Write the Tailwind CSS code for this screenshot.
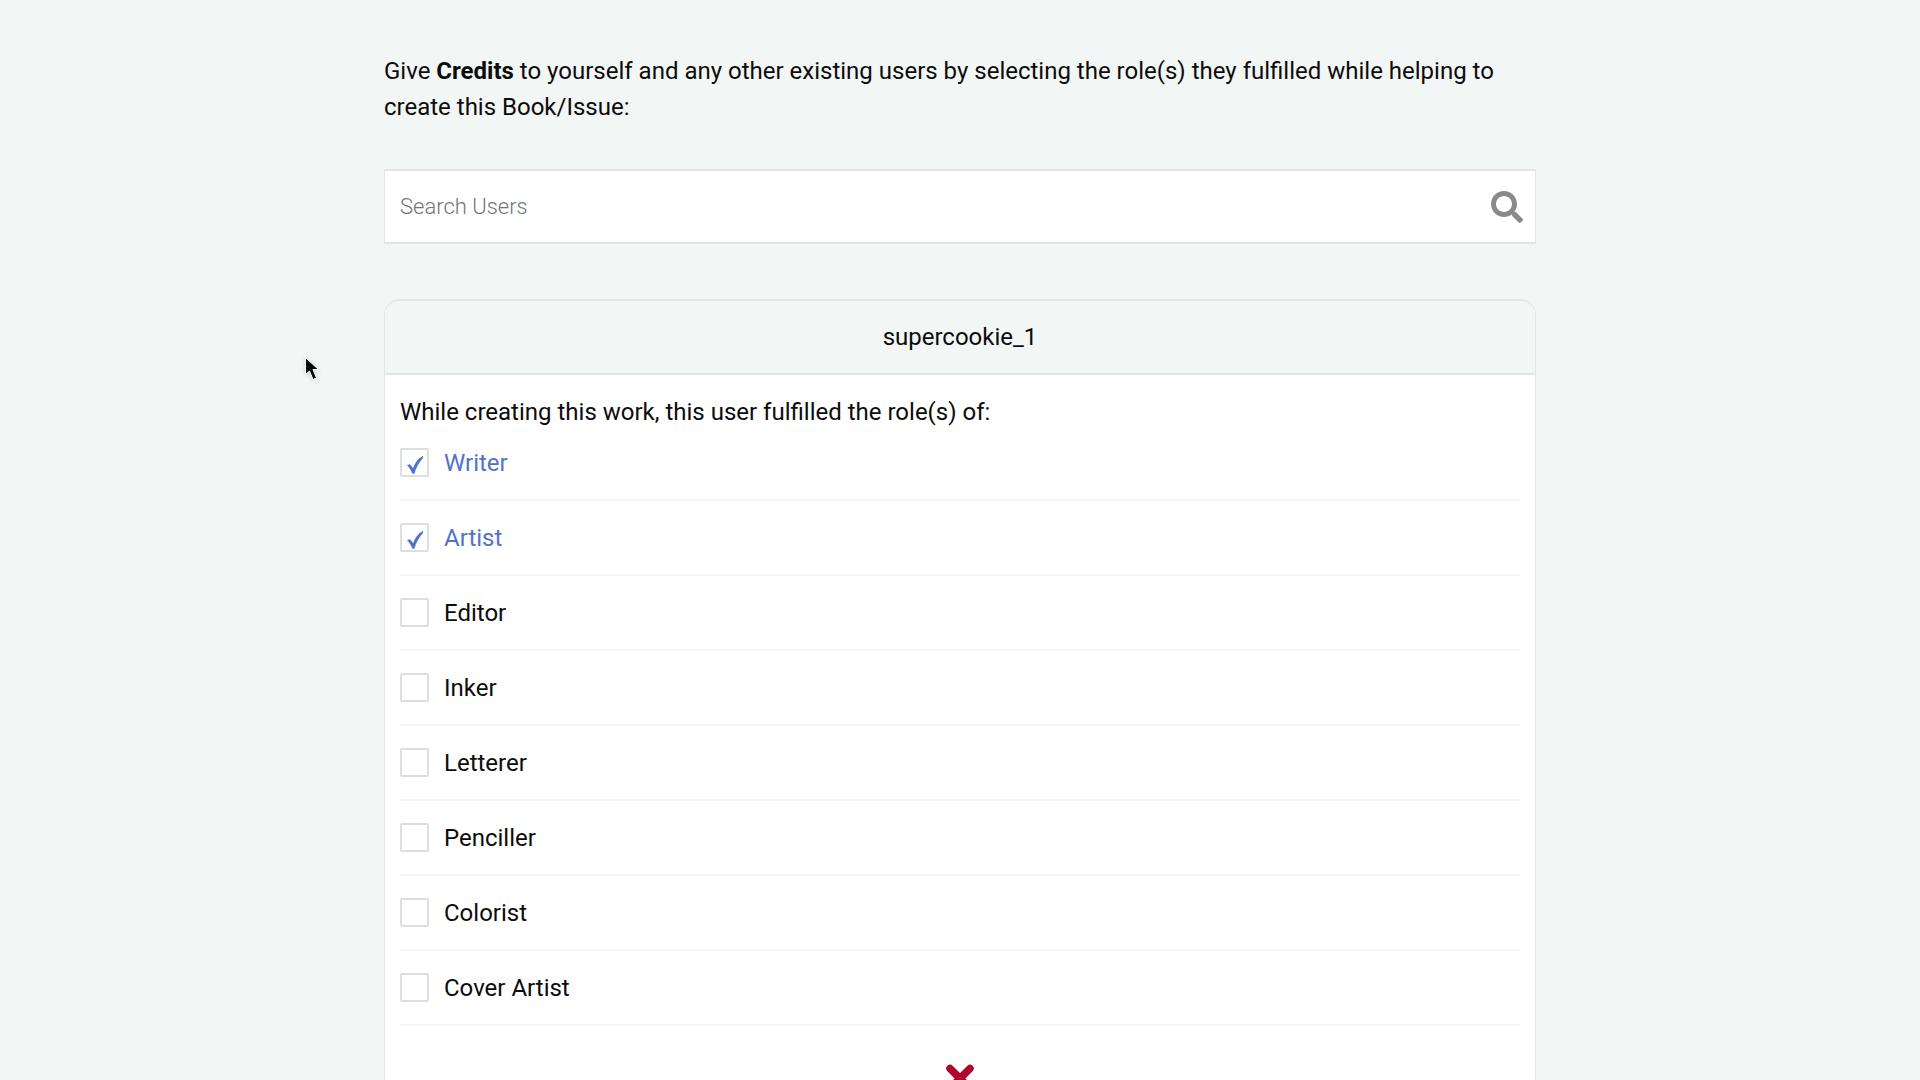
<!DOCTYPE html>
<html lang="en">
<head>
<meta charset="utf-8">
<meta name="viewport" content="width=device-width, initial-scale=1">
<title>Credits</title>
<script src="https://cdn.jsdelivr.net/npm/@tailwindcss/browser@4"></script>
</head>
<body class="min-h-screen bg-[#f2f6f5] font-['Roboto',sans-serif] text-2xl text-[#0c0c0c]">
<main class="mx-auto w-full max-w-6xl pt-[53px]">
  <p class="leading-9">Give <strong class="font-bold">Credits</strong> to yourself and any other existing users by selecting the role(s) they fulfilled while helping to create this Book/Issue:</p>

  <form role="search" class="mt-11 flex h-[75px] items-center border border-y-2 border-[#e2e5e4] bg-white">
    <input type="search" aria-label="Search Users" placeholder="Search Users" class="h-full min-w-0 flex-1 px-[15px] text-[22px] font-light outline-none placeholder:text-[#757575]">
    <button type="button" aria-label="Search" class="mr-3 text-[#8a8a8a]">
      <svg class="size-8" viewBox="0 0 512 512" fill="currentColor" aria-hidden="true"><path d="M505 442.700 405.300 343c-4.500-4.500-10.600-7-17-7H372c27.600-35.300 44-79.700 44-128C416 93.100 322.900 0 208 0S0 93.100 0 208s93.100 208 208 208c48.300 0 92.700-16.400 128-44v16.300c0 6.400 2.500 12.500 7 17l99.700 99.700c9.400 9.400 24.600 9.400 33.900 0l28.300-28.300c9.400-9.400 9.400-24.600.1-34zM208 336c-70.700 0-128-57.200-128-128 0-70.700 57.200-128 128-128 70.700 0 128 57.200 128 128 0 70.700-57.200 128-128 128z"/></svg>
    </button>
  </form>

  <section class="mt-[55px] overflow-hidden rounded-t-2xl border border-t-2 border-[#e2e5e4] bg-white pb-8">
    <h2 class="flex h-[74px] items-center justify-center border-b-2 border-[#e2e5e4] bg-[#f2f6f5]">supercookie_1</h2>
    <fieldset class="px-[15px] pt-[19px]">
      <legend class="contents"><span class="block leading-9">While creating this work, this user fulfilled the role(s) of:</span></legend>
      <ul>
        <li class="flex h-[71px] items-center border-b-2 border-[#f4f5f5] pb-1"><label class="flex items-center gap-[15px] text-[#5272ca]"><span class="grid size-[29px] place-items-center"><input type="checkbox" checked class="peer col-start-1 row-start-1 size-[29px] appearance-none rounded-xs border-2 border-[#dcdfdf] bg-white"><svg class="pointer-events-none invisible relative col-start-1 row-start-1 mt-1 size-5 peer-checked:visible" viewBox="0 0 20 20" fill="currentColor" stroke="currentColor" stroke-width=".4" aria-hidden="true"><path d="M2.300 10.300 5 9.500 8.200 13.500C10 8 13 3.800 18 1L17.500 3.600C13.500 7.500 11.200 12.500 9.300 18.500H7.500C6.200 15.500 4.700 12.700 2.300 10.300Z"/></svg></span>Writer</label></li>
        <li class="flex h-[75px] items-center border-b-2 border-[#f4f5f5]"><label class="flex items-center gap-[15px] text-[#5272ca]"><span class="grid size-[29px] place-items-center"><input type="checkbox" checked class="peer col-start-1 row-start-1 size-[29px] appearance-none rounded-xs border-2 border-[#dcdfdf] bg-white"><svg class="pointer-events-none invisible relative col-start-1 row-start-1 mt-1 size-5 peer-checked:visible" viewBox="0 0 20 20" fill="currentColor" stroke="currentColor" stroke-width=".4" aria-hidden="true"><path d="M2.300 10.300 5 9.500 8.200 13.500C10 8 13 3.800 18 1L17.500 3.600C13.500 7.500 11.200 12.500 9.300 18.500H7.500C6.200 15.500 4.700 12.700 2.300 10.300Z"/></svg></span>Artist</label></li>
        <li class="flex h-[75px] items-center border-b-2 border-[#f4f5f5]"><label class="flex items-center gap-[15px]"><input type="checkbox" class="size-[29px] appearance-none rounded-xs border-2 border-[#dcdfdf] bg-white">Editor</label></li>
        <li class="flex h-[75px] items-center border-b-2 border-[#f4f5f5]"><label class="flex items-center gap-[15px]"><input type="checkbox" class="size-[29px] appearance-none rounded-xs border-2 border-[#dcdfdf] bg-white">Inker</label></li>
        <li class="flex h-[75px] items-center border-b-2 border-[#f4f5f5]"><label class="flex items-center gap-[15px]"><input type="checkbox" class="size-[29px] appearance-none rounded-xs border-2 border-[#dcdfdf] bg-white">Letterer</label></li>
        <li class="flex h-[75px] items-center border-b-2 border-[#f4f5f5]"><label class="flex items-center gap-[15px]"><input type="checkbox" class="size-[29px] appearance-none rounded-xs border-2 border-[#dcdfdf] bg-white">Penciller</label></li>
        <li class="flex h-[75px] items-center border-b-2 border-[#f4f5f5]"><label class="flex items-center gap-[15px]"><input type="checkbox" class="size-[29px] appearance-none rounded-xs border-2 border-[#dcdfdf] bg-white">Colorist</label></li>
        <li class="flex h-[75px] items-center border-b-2 border-[#f4f5f5]"><label class="flex items-center gap-[15px]"><input type="checkbox" class="size-[29px] appearance-none rounded-xs border-2 border-[#dcdfdf] bg-white">Cover Artist</label></li>
      </ul>
    </fieldset>
    <button type="button" aria-label="Remove user" class="mx-auto mt-[38px] block text-[#b00530]">
      <svg class="size-7" viewBox="0 0 28 28" fill="none" stroke="currentColor" stroke-width="7.500" stroke-linecap="round" aria-hidden="true"><path d="M4 4.500 24 24.500M24 4.500 4 24.500"/></svg>
    </button>
  </section>
</main>
<svg class="pointer-events-none absolute top-[355px] left-[303px] h-8 w-5 drop-shadow-sm" viewBox="0 0 20 32" aria-hidden="true"><path d="M2.500 2.500V19.500L6.500 16 10 24.500 13.500 23 10 14.500H15.500Z" fill="#080808" stroke="#fff" stroke-width="1"/></svg>
</body>
</html>
